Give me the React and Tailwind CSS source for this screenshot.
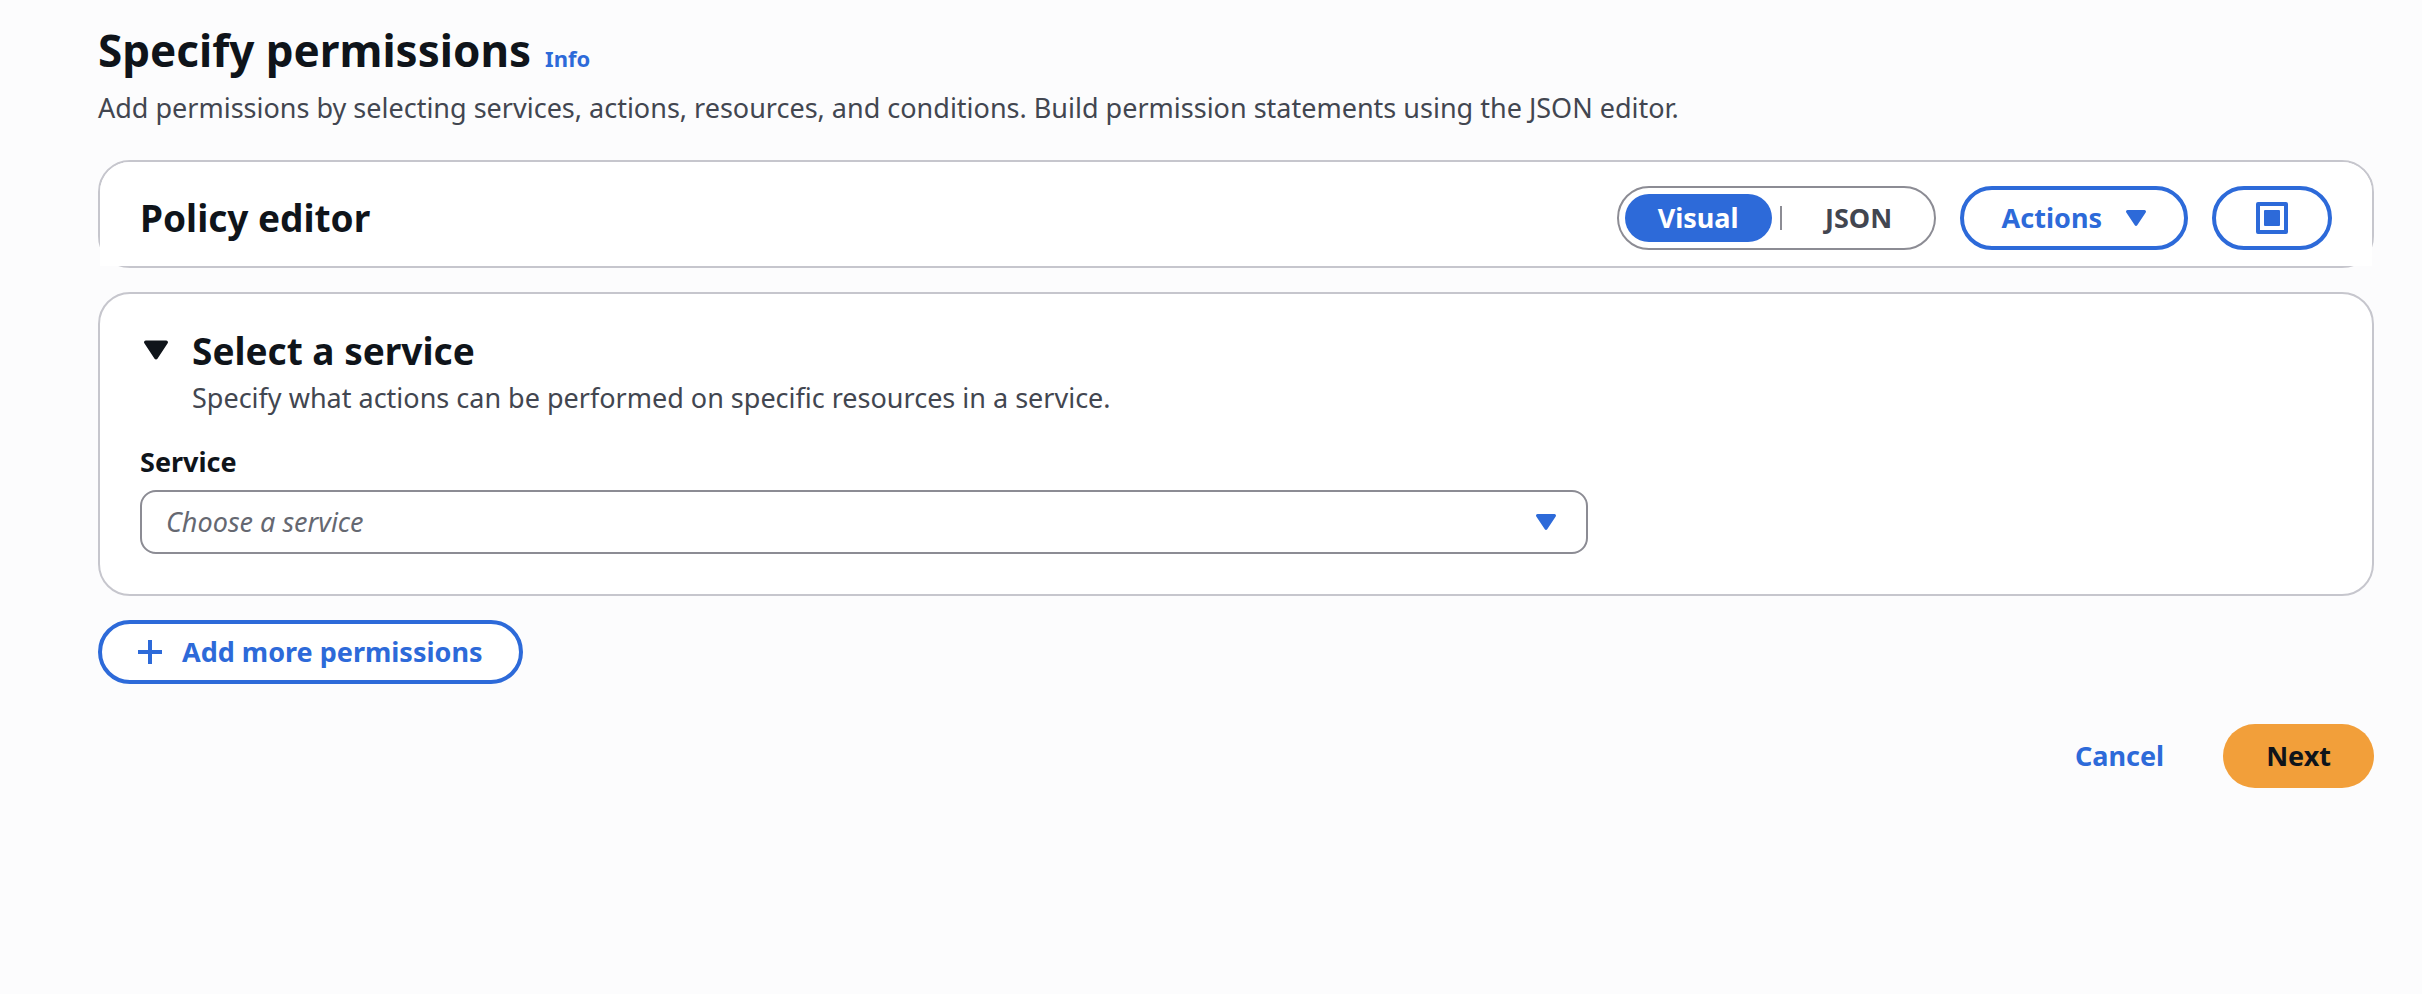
import React, { useState } from "react";

function CaretDown({ className }) {
  return (
    <svg viewBox="0 0 20 16" className={className} fill="currentColor" aria-hidden="true">
      <path d="M1.5 0h17c1.2 0 1.9 1.4 1.2 2.4L11.2 15.2c-.6.9-1.8.9-2.4 0L.3 2.4C-.4 1.4.3 0 1.5 0z" />
    </svg>
  );
}

function OutlineButton({ children, className = "", ...props }) {
  return (
    <button
      type="button"
      className={`flex h-16 items-center rounded-full border-4 border-[#2d6ad9] bg-white font-bold text-[#2d6ad9] ${className}`}
      {...props}
    >
      {children}
    </button>
  );
}

function ModeSwitch() {
  const [mode, setMode] = useState("Visual");
  const active = "bg-[#2d6ad9] text-white";
  const idle = "text-[#424650]";
  return (
    <div role="group" aria-label="Editor mode" className="flex h-16 items-center rounded-full border-2 border-[#8c8c94] bg-white px-1.5">
      <button
        type="button"
        aria-pressed={mode === "Visual"}
        onClick={() => setMode("Visual")}
        className={`h-12 min-w-[147px] rounded-full px-8 font-bold ${mode === "Visual" ? active : idle}`}
      >
        Visual
      </button>
      <span className="mx-2 h-6 w-0.5 bg-[#8c8c94]" />
      <button
        type="button"
        aria-pressed={mode === "JSON"}
        onClick={() => setMode("JSON")}
        className={`h-12 min-w-[138px] rounded-full px-8 font-bold ${mode === "JSON" ? active : idle}`}
      >
        JSON
      </button>
    </div>
  );
}

export default function App() {
  return (
    <main className="min-h-screen bg-[#fcfcfd] pt-5 pr-12 pb-12 pl-[98px] font-['Noto_Sans','Open_Sans',sans-serif] text-[27px] leading-10 text-[#0f141a]">
      <header className="mb-8">
        <div className="flex items-baseline gap-3.5">
          <h1 className="text-[44px] leading-[60px] font-bold">Specify permissions</h1>
          <a href="#info" className="text-[22px] font-bold text-[#2d6ad9]">Info</a>
        </div>
        <p className="mt-2 text-[#424650]">
          Add permissions by selecting services, actions, resources, and conditions. Build permission statements using the JSON editor.
        </p>
      </header>

      <section className="rounded-[32px] border-2 border-[#c6c6cd] bg-white">
        <div className="flex items-center justify-between rounded-t-[30px] bg-white px-10 pt-6 pb-4">
          <h2 className="text-[37px] leading-[50px] font-bold">Policy editor</h2>
          <div className="flex items-center gap-6">
            <ModeSwitch />
            <OutlineButton className="gap-6 px-[38px]">
              Actions
              <CaretDown className="h-4 w-5" />
            </OutlineButton>
            <OutlineButton className="px-10" aria-label="Toggle full screen">
              <svg viewBox="0 0 32 32" className="size-8" aria-hidden="true">
                <rect x="2" y="2" width="28" height="28" fill="none" stroke="currentColor" strokeWidth="4" strokeLinejoin="round" />
                <rect x="8" y="8" width="16" height="16" rx="1" fill="currentColor" />
              </svg>
            </OutlineButton>
          </div>
        </div>
      </section>

      <section className="mt-6 rounded-[32px] border-2 border-[#c6c6cd] bg-white px-10 pt-8 pb-10">
        <div className="flex gap-6">
          <button type="button" aria-label="Collapse section" className="flex h-12 items-center pl-1">
            <CaretDown className="h-5 w-6" />
          </button>
          <div>
            <h2 className="text-[37px] leading-[50px] font-bold">Select a service</h2>
            <p className="leading-[44px] text-[#424650]">Specify what actions can be performed on specific resources in a service.</p>
          </div>
        </div>
        <div className="mt-5 grid grid-cols-3 gap-10">
          <div className="col-span-2">
            <label htmlFor="service" className="mb-1.5 block leading-[44px] font-bold">Service</label>
            <div className="grid items-center">
              <select
                id="service"
                defaultValue=""
                className="col-start-1 row-start-1 h-16 w-full appearance-none rounded-2xl border-2 border-[#8c8c94] bg-white pr-16 pl-6 text-[#656871] italic"
              >
                <option value="">Choose a service</option>
              </select>
              <CaretDown className="pointer-events-none col-start-1 row-start-1 mr-8 h-4 w-5 justify-self-end text-[#2d6ad9]" />
            </div>
          </div>
        </div>
      </section>

      <OutlineButton className="mt-6 gap-5 px-9">
        <svg viewBox="0 0 24 24" className="size-6" fill="none" stroke="currentColor" strokeWidth="4" aria-hidden="true">
          <path d="M12 0v24M0 12h24" />
        </svg>
        Add more permissions
      </OutlineButton>

      <footer className="mt-10 flex justify-end gap-4">
        <button type="button" className="h-16 rounded-full px-[43px] font-bold text-[#2d6ad9]">Cancel</button>
        <button type="button" className="h-16 rounded-full bg-[#f29f3a] px-[43px] font-bold">Next</button>
      </footer>
    </main>
  );
}
